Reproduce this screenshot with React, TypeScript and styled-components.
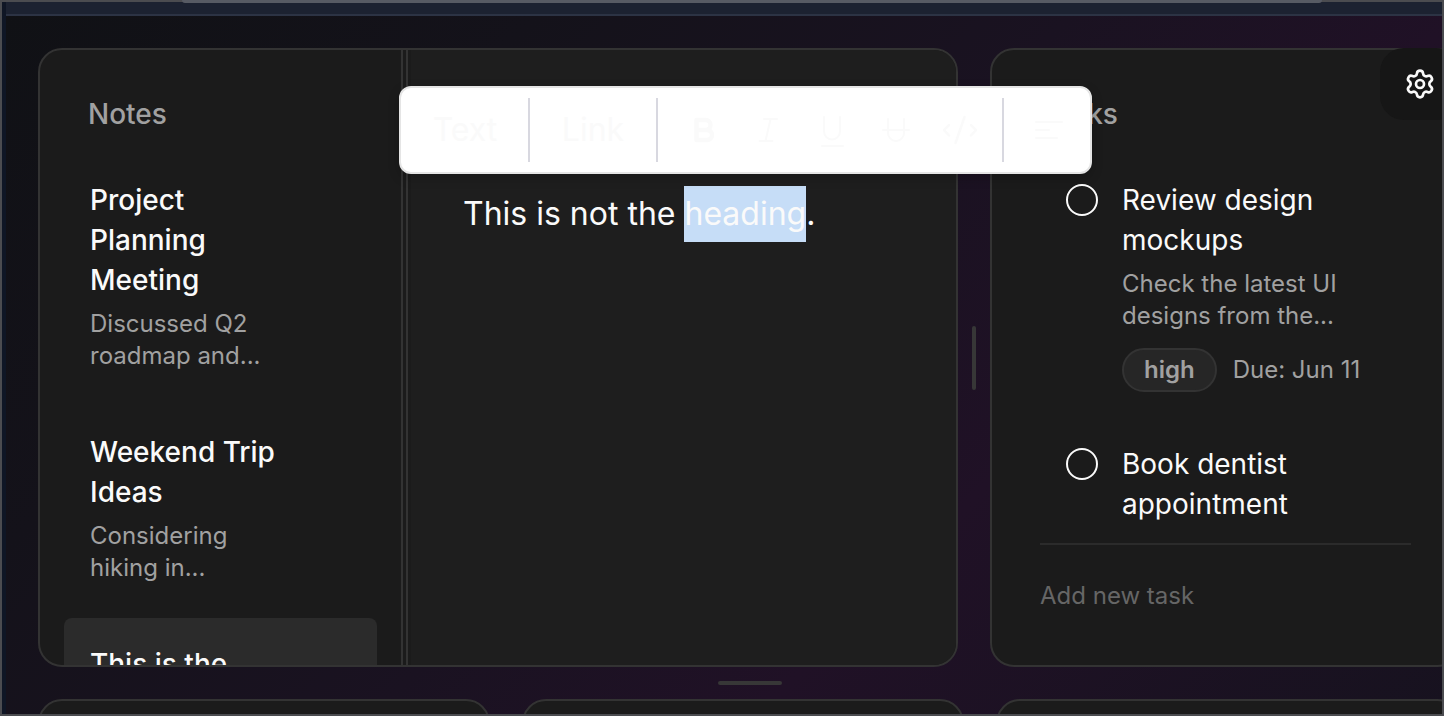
import React from "react";
import styled, { createGlobalStyle } from "styled-components";
import { Settings } from "lucide-react";

const GlobalStyle = createGlobalStyle`
  *, *::before, *::after { box-sizing: border-box; }
  body {
    margin: 0;
    background: #111316;
    color: #fafafa;
    font-family: Inter, sans-serif;
    font-variation-settings: "opsz" 14;
  }
  h2, h3, p, ul { margin: 0; padding: 0; }
  button, input { font: inherit; color: inherit; font-variation-settings: inherit; }
`;

const Shell = styled.div`
  position: relative;
  display: flex;
  flex-direction: column;
  height: 100vh;
  overflow: hidden;
  padding: 2px;
`;

const Frame = styled.div`
  position: absolute;
  inset: 0;
  border: 2px solid #4b4c50;
  pointer-events: none;
  &::before {
    content: "";
    position: absolute;
    top: -2px;
    left: 180px;
    right: 120px;
    height: 3px;
    border-radius: 0 0 8px 8px;
    background: #575b64;
  }
`;

const TopStrip = styled.div`
  flex: 0 0 14px;
  background: #1c2231;
  border-bottom: 2px solid #2c3344;
`;

const Board = styled.main`
  flex: 1;
  min-height: 0;
  display: flex;
  flex-direction: column;
  padding: 32px 0 0 36px;
  background: linear-gradient(135deg, #101115 0%, #14121a 25%, #1a1221 50%, #201126 68%, #17121f 100%);
`;

const EdgeBar = styled.div`
  position: absolute;
  top: 2px;
  bottom: 2px;
  left: 2px;
  width: 4px;
  background: #0f1625;
`;

const TopRow = styled.div`
  flex: 1;
  min-height: 0;
  display: grid;
  grid-template-columns: 920fr 32px 471fr;
  margin-right: -19px;
`;

const BottomRow = styled.div`
  flex: none;
  height: 15px;
  display: grid;
  grid-template-columns: 452fr 442fr 465fr;
  gap: 32px;
  margin-right: -19px;
`;

const Grip = styled.div<{ $row?: boolean }>`
  display: flex;
  align-items: center;
  justify-content: center;
  ${(p) => (p.$row ? "flex: 0 0 32px; margin-right: -19px;" : "")}
  &::before {
    content: "";
    width: ${(p) => (p.$row ? 64 : 4)}px;
    height: ${(p) => (p.$row ? 4 : 64)}px;
    border-radius: 2px;
    background: #373737;
  }
`;

const Panel = styled.section`
  display: flex;
  min-width: 0;
  min-height: 0;
  overflow: hidden;
  border: 2px solid #333333;
  border-radius: 24px;
  background: #1b1b1b;
`;

const PeekPanel = styled(Panel)`
  height: 120px;
`;

const Sidebar = styled.aside`
  flex: 0 0 363px;
  border-right: 2px solid #333333;
`;

const PanelTitle = styled.h2`
  padding: 44px 48px 20px;
  font-size: 28px;
  line-height: 40px;
  font-weight: 500;
  font-variation-settings: normal;
  color: #a1a1a1;
`;

const NoteList = styled.ul`
  display: flex;
  flex-direction: column;
  gap: 8px;
  padding: 0 24px;
  list-style: none;
`;

const NoteItem = styled.li<{ $active?: boolean }>`
  padding: 26px 76px 26px 26px;
  border-radius: 8px;
  background: ${(p) => (p.$active ? "#2b2b2b" : "transparent")};
`;

const ItemTitle = styled.h3<{ $strong?: boolean }>`
  font-size: 28px;
  line-height: 40px;
  font-weight: ${(p) => (p.$strong ? 500 : 400)};
`;

const ItemText = styled.p`
  margin-top: 8px;
  font-size: 24px;
  line-height: 32px;
  color: #a1a1a1;
`;

const Divider = styled.div`
  flex: 0 0 8px;
  display: flex;
  justify-content: center;
  &::before {
    content: "";
    width: 2px;
    background: #333333;
  }
`;

const Editor = styled.div`
  flex: 1;
  min-width: 0;
  padding: 136px 52px 0;
  background: #1e1e1e;
  font-size: 32px;
  line-height: 56px;
`;

const Selected = styled.span`
  display: inline-block;
  background: #c6ddf7;
`;

const TasksPanel = styled(Panel)`
  flex-direction: column;
`;

const TaskList = styled.ul`
  flex: 1;
  min-height: 0;
  overflow: hidden;
  padding: 0 48px;
  list-style: none;
`;

const TaskItem = styled.li`
  display: flex;
  gap: 24px;
  padding: 26px;
`;

const TaskCheck = styled.input`
  appearance: none;
  flex: 0 0 32px;
  height: 32px;
  margin: 4px 0;
  border: 2px solid #fafafa;
  border-radius: 50%;
`;

const TaskMeta = styled.div`
  display: flex;
  align-items: center;
  gap: 16px;
  margin-top: 16px;
  font-size: 24px;
  line-height: 32px;
  color: #a1a1a1;
  white-space: nowrap;
`;

const Badge = styled.span`
  padding: 4px 20px;
  border: 2px solid #333333;
  border-radius: 22px;
  background: #262626;
  font-weight: 600;
`;

const AddTask = styled.form`
  margin: 0 48px;
  padding: 35px 0 53px;
  border-top: 2px solid #2b2b2b;
`;

const AddInput = styled.input`
  display: block;
  width: 100%;
  height: 32px;
  padding: 0;
  border: 0;
  outline: 0;
  background: transparent;
  font-size: 24px;
  line-height: 32px;
  &::placeholder { color: #666666; opacity: 1; }
`;

const SettingsButton = styled.button`
  position: absolute;
  top: 48px;
  right: -16px;
  display: flex;
  align-items: center;
  justify-content: center;
  width: 80px;
  height: 72px;
  padding: 0;
  border: 0;
  border-radius: 24px;
  background: #161616;
`;

const Toolbar = styled.div`
  position: absolute;
  top: 86px;
  left: 399px;
  display: flex;
  width: 693px;
  height: 88px;
  padding: 10px 0 10px 1px;
  border: 2px solid #e5e5e5;
  border-radius: 12px;
  background: #ffffff;
  box-shadow: 0 4px 12px rgba(0, 0, 0, 0.2);
  color: #fafafa;
`;

const ToolGroup = styled.div<{ $wide?: boolean }>`
  flex: ${(p) => (p.$wide ? "0 0 346px" : "0 0 128px")};
  display: flex;
  align-items: center;
  justify-content: center;
  padding-left: ${(p) => (p.$wide ? 4 : 0)}px;
  border-right: 2px solid #d8d8e0;
  &:last-child { flex: 1; border-right: 0; padding-left: 4px; }
`;

const ToolButton = styled.button<{ $icon?: boolean }>`
  display: flex;
  align-items: center;
  justify-content: center;
  width: ${(p) => (p.$icon ? "64px" : "auto")};
  height: 64px;
  padding: 0;
  border: 0;
  background: transparent;
  font-size: 32px;
  line-height: 40px;
`;

const icons: { name: string; width: number; d: string }[] = [
  { name: "Bold", width: 4.5, d: "M12.500 10h9a5 5 0 0 1 0 10h-9zM12.500 20H23a5 5 0 0 1 0 10H12.500z" },
  { name: "Italic", width: 2, d: "M16 9h13M11.500 31h13M22.500 9 17.500 31" },
  { name: "Underline", width: 2, d: "M12 7v14.500a8 8 0 0 0 16 0V7M10 36h21" },
  { name: "Strikethrough", width: 2, d: "M12 9v14a8 8 0 0 0 16 0V9M7 20h26" },
  { name: "Code", width: 2.5, d: "M9 15 4 20.200 9 25.500M31 15l5 5.200L31 25.500M24.500 7 15.500 33" },
];

const notes = [
  { title: "Project Planning Meeting", text: "Discussed Q2 roadmap and..." },
  { title: "Weekend Trip Ideas", text: "Considering hiking in..." },
  { title: "This is the heading", text: "This is not the heading.", active: true },
];

const Glyph = ({ d, width }: { d: string; width: number }) => (
  <svg
    width="40"
    height="40"
    viewBox="0 0 40 40"
    fill="none"
    stroke="currentColor"
    strokeWidth={width}
    strokeLinecap="round"
    strokeLinejoin="round"
    aria-hidden="true"
  >
    <path d={d} />
  </svg>
);

export default function App() {
  return (
    <Shell>
      <GlobalStyle />
      <TopStrip />
      <Board>
        <TopRow>
          <Panel>
            <Sidebar>
              <PanelTitle>Notes</PanelTitle>
              <NoteList>
                {notes.map((n) => (
                  <NoteItem key={n.title} $active={n.active}>
                    <ItemTitle $strong>{n.title}</ItemTitle>
                    <ItemText>{n.text}</ItemText>
                  </NoteItem>
                ))}
              </NoteList>
            </Sidebar>
            <Divider />
            <Editor>
              <p>This is not the <Selected>heading</Selected>.</p>
            </Editor>
          </Panel>
          <Grip />
          <TasksPanel>
            <PanelTitle>Tasks</PanelTitle>
            <TaskList>
              <TaskItem>
                <TaskCheck type="checkbox" id="task-review" />
                <div>
                  <ItemTitle as="label" htmlFor="task-review">Review design mockups</ItemTitle>
                  <ItemText>Check the latest UI designs from the...</ItemText>
                  <TaskMeta>
                    <Badge>high</Badge>
                    <span>Due: Jun 11</span>
                  </TaskMeta>
                </div>
              </TaskItem>
              <TaskItem>
                <TaskCheck type="checkbox" id="task-dentist" />
                <div>
                  <ItemTitle as="label" htmlFor="task-dentist">Book dentist appointment</ItemTitle>
                </div>
              </TaskItem>
            </TaskList>
            <AddTask>
              <AddInput aria-label="Add new task" placeholder="Add new task" />
            </AddTask>
          </TasksPanel>
        </TopRow>
        <Grip $row />
        <BottomRow>
          <PeekPanel />
          <PeekPanel />
          <PeekPanel />
        </BottomRow>
      </Board>
      <SettingsButton aria-label="Settings">
        <Settings size={32} strokeWidth={2} />
      </SettingsButton>
      <Toolbar role="toolbar" aria-label="Formatting">
        <ToolGroup><ToolButton>Text</ToolButton></ToolGroup>
        <ToolGroup><ToolButton>Link</ToolButton></ToolGroup>
        <ToolGroup $wide>
          {icons.map((i) => (
            <ToolButton key={i.name} $icon aria-label={i.name}>
              <Glyph d={i.d} width={i.width} />
            </ToolButton>
          ))}
        </ToolGroup>
        <ToolGroup>
          <ToolButton $icon aria-label="Align left">
            <Glyph width={2} d="M7 12h26M7 20h13M7 28h21" />
          </ToolButton>
        </ToolGroup>
      </Toolbar>
      <EdgeBar />
      <Frame />
    </Shell>
  );
}
